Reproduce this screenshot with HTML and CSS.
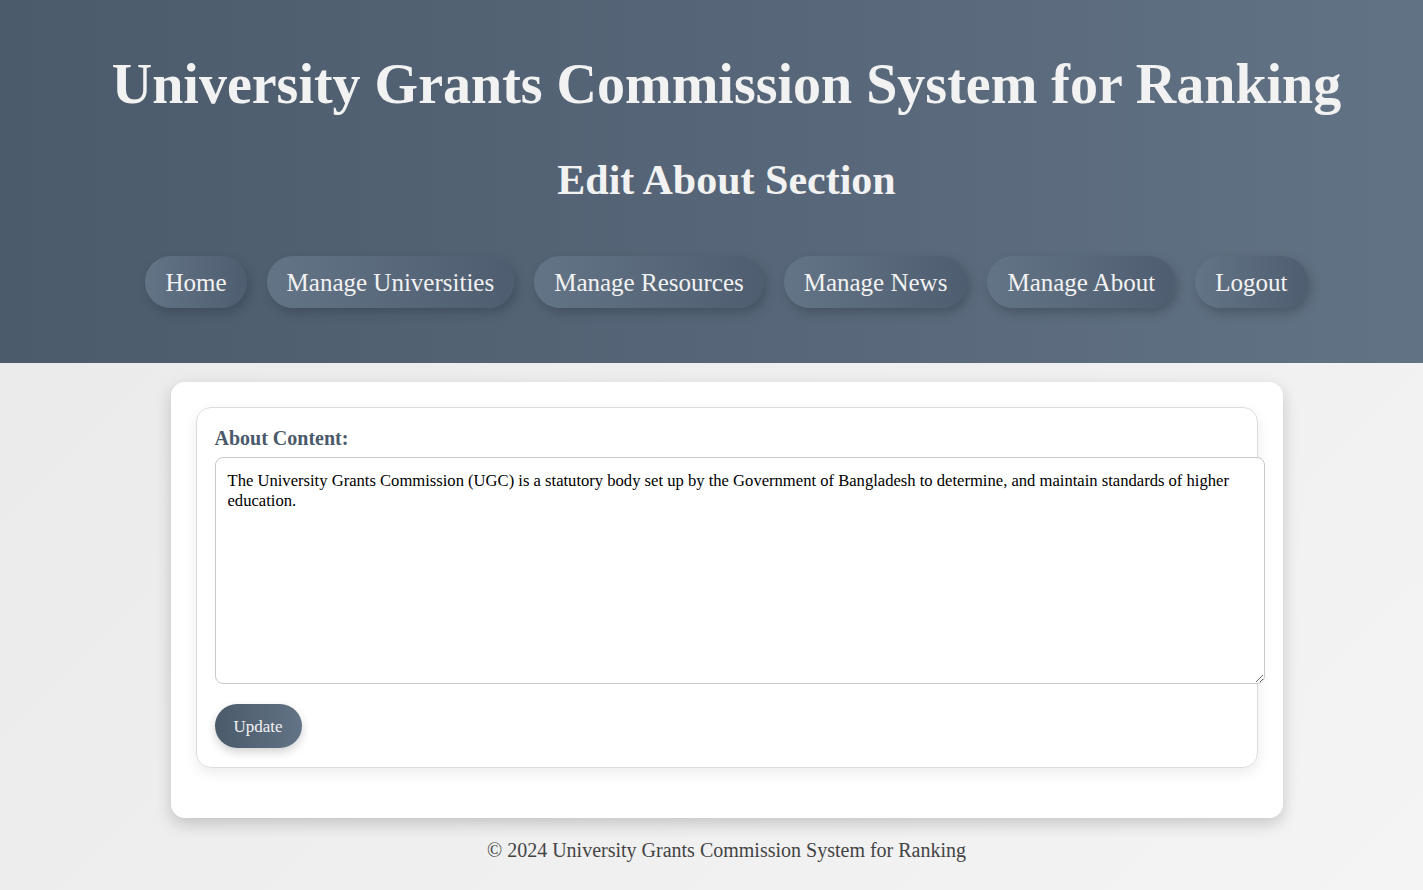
FILE: index.html
```html
<!DOCTYPE html>
<html lang="en">
<head>
<meta charset="utf-8">
<title>Edit About Section</title>
<link rel="stylesheet" href="styles.css">
</head>
<body>
<header class="site-header">
  <h1 class="site-title">University Grants Commission System for Ranking</h1>
  <h2 class="page-title">Edit About Section</h2>
  <nav class="nav">
    <a class="nav-btn" href="#">Home</a>
    <a class="nav-btn" href="#">Manage Universities</a>
    <a class="nav-btn" href="#">Manage Resources</a>
    <a class="nav-btn" href="#">Manage News</a>
    <a class="nav-btn" href="#">Manage About</a>
    <a class="nav-btn" href="#">Logout</a>
  </nav>
</header>
<main class="main">
  <section class="card">
    <form class="form-box">
      <label class="form-label" for="about">About Content:</label>
      <textarea id="about" class="form-textarea">The University Grants Commission (UGC) is a statutory body set up by the Government of Bangladesh to determine, and maintain standards of higher education.</textarea>
      <button type="button" class="btn-update">Update</button>
    </form>
  </section>
</main>
<footer class="site-footer">© 2024 University Grants Commission System for Ranking</footer>
</body>
</html>
```
FILE: styles.css
```css
* { box-sizing: border-box; }
html, body { margin: 0; padding: 0; }
body {
  font-family: "Liberation Serif", "Times New Roman", serif;
  background: linear-gradient(135deg, #e9e9e9, #f4f4f4);
  min-height: 890px;
  min-width: 1453px;
  color: #333;
}
.site-header {
  background: linear-gradient(90deg, #4b5b6c 0%, #566678 50%, #627385 100%);
  color: #f2f2f2;
  text-align: center;
  padding: 52px 20px 55px;
}
.site-title {
  font-size: 56px;
  line-height: 64px;
  margin: 0;
  font-weight: bold;
}
.page-title {
  font-size: 42px;
  line-height: 48px;
  margin: 40px 0 0;
  font-weight: bold;
}
.nav {
  display: flex;
  justify-content: center;
  gap: 20px;
  margin-top: 52px;
}
.nav-btn {
  display: inline-block;
  color: #f2f2f2;
  text-decoration: none;
  font-size: 25px;
  line-height: 32px;
  padding: 11px 20px 9px;
  border-radius: 30px;
  background: linear-gradient(90deg, #637486, #4e5e70);
  box-shadow: 3px 5px 10px rgba(40, 50, 62, 0.35);
}
.main {
  display: flex;
  justify-content: center;
  padding-top: 19px;
}
.card {
  width: 1112px;
  background: #fff;
  border-radius: 14px;
  box-shadow: 0 6px 16px rgba(0, 0, 0, 0.18);
  padding: 25px 25px 50px;
}
.form-box {
  border: 1px solid #dcdcdc;
  border-radius: 15px;
  box-shadow: 0 5px 14px rgba(0, 0, 0, 0.08);
  padding: 18px 18px 19px;
  display: flex;
  flex-direction: column;
  align-items: flex-start;
}
.form-label {
  font-size: 20px;
  font-weight: bold;
  color: #4a5a6b;
  line-height: 24px;
  margin-bottom: 7px;
}
.form-textarea {
  width: 1050px;
  height: 227px;
  border: 1px solid #c8c8c8;
  border-radius: 8px;
  padding: 13px 12px 12px;
  font-family: "Liberation Serif", "Times New Roman", serif;
  font-size: 16.6px;
  line-height: 20px;
  color: #000;
  resize: vertical;
  margin-bottom: 20px;
}
.btn-update {
  font-family: "Liberation Serif", "Times New Roman", serif;
  font-size: 17px;
  color: #f2f2f2;
  border: 0;
  border-radius: 22px;
  padding: 1px 19px 0;
  height: 44px;
  background: linear-gradient(90deg, #4a5a6b, #627385);
  box-shadow: 0 4px 10px rgba(0, 0, 0, 0.18);
  cursor: pointer;
}
.site-footer {
  text-align: center;
  font-size: 20px;
  color: #444;
  padding-top: 21px;
}
```
